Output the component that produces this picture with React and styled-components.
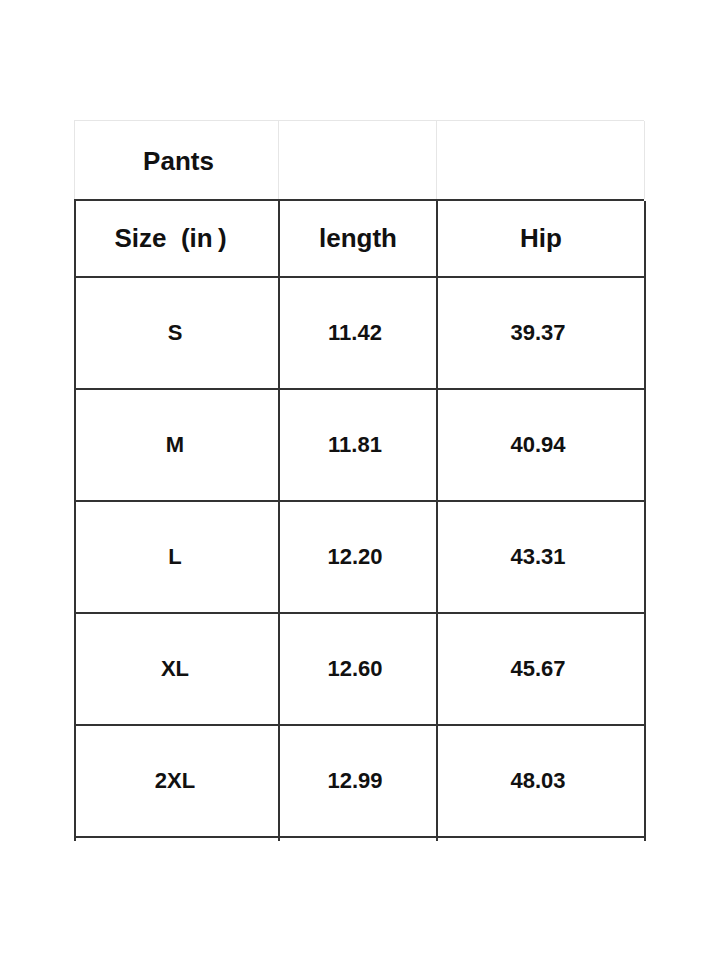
import React from 'react'
import styled, { createGlobalStyle } from 'styled-components'

const GlobalStyle = createGlobalStyle`
  * {
    margin: 0;
    padding: 0;
    box-sizing: border-box;
  }
  body {
    background: #ffffff;
    font-family: "Liberation Sans", Arial, sans-serif;
    color: #111111;
  }
`;

const Page = styled.div`
  width: 720px;
  height: 960px;
  padding: 120px 0 0 74px;
  background: #ffffff;
`;

const COLS = '204px 158px 208px';

const TitleRow = styled.div`
  display: grid;
  grid-template-columns: ${COLS};
  width: 570px;
  height: 79px;
  border-top: 1px solid #e6e6e6;
  border-left: 1px solid #e6e6e6;
`;

const TitleCell = styled.div`
  display: flex;
  align-items: center;
  justify-content: center;
  border-right: 1px solid #e6e6e6;
  font-size: 26px;
  font-weight: 700;
  padding-left: ${p => p.$pl || 0}px;
  padding-top: 2px;
`;

const Table = styled.div`
  display: grid;
  grid-template-columns: ${COLS};
  width: 570px;
  border-top: 2px solid #333333;
  border-left: 2px solid #333333;
`;

const Cell = styled.div`
  display: flex;
  align-items: center;
  justify-content: center;
  height: ${p => p.$h}px;
  border-right: 2px solid #333333;
  border-bottom: ${p => (p.$tail ? 'none' : '2px solid #333333')};
  font-size: ${p => (p.$head ? 26 : 22)}px;
  font-weight: 700;
  white-space: pre;
  padding-right: ${p => p.$pr || 0}px;
`;

const rows = [
  ['S', '11.42', '39.37'],
  ['M', '11.81', '40.94'],
  ['L', '12.20', '43.31'],
  ['XL', '12.60', '45.67'],
  ['2XL', '12.99', '48.03'],
];

const pads = [4, 6, 6];

export default function App() {
  return (
    <Page>
      <GlobalStyle />
      <TitleRow>
        <TitleCell $pl={4}>Pants</TitleCell>
        <TitleCell />
        <TitleCell />
      </TitleRow>
      <Table>
        <Cell $head $h={77} $pr={13}>{'Size\u00a0\u00a0(in\u2009)'}</Cell>
        <Cell $head $h={77}>length</Cell>
        <Cell $head $h={77}>Hip</Cell>
        {rows.map(r =>
          r.map((v, i) => (
            <Cell key={r[0] + i} $h={112} $pr={pads[i]}>{v}</Cell>
          ))
        )}
        <Cell $tail $h={3} />
        <Cell $tail $h={3} />
        <Cell $tail $h={3} />
      </Table>
    </Page>
  )
}
